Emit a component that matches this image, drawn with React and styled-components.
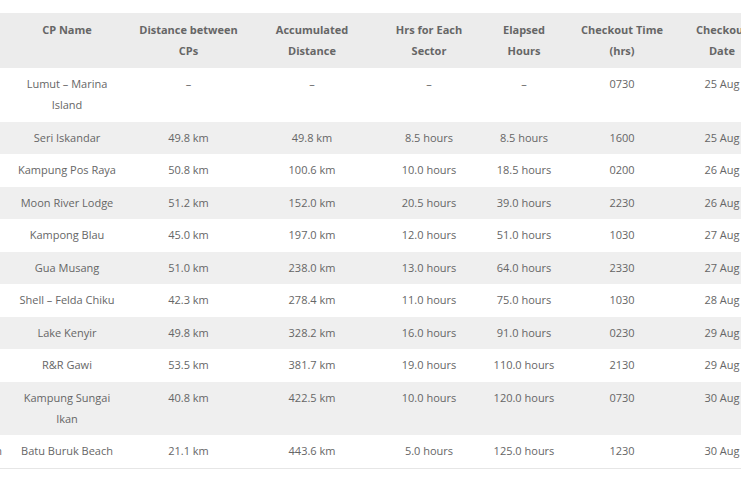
import React from 'react';
import styled, { createGlobalStyle } from 'styled-components';

const GlobalStyle = createGlobalStyle`
    html, body {
        margin: 0;
        padding: 0;
        background: #fff;
    }
    body {
        font-family: 'Open Sans', 'Noto Sans', sans-serif;
    }
`;

const Viewport = styled.div`
    width: 741px;
    height: 486px;
    overflow: hidden;
    padding-top: 13px;
    box-sizing: border-box;
`;

const Tabla = styled.table`
    margin-left: -33px;
    border-collapse: collapse;
    table-layout: fixed;
    width: 797px;
    font-size: 11px;
    line-height: 21px;
    color: #666;
    border-bottom: 1px solid #e6e6e6;
`;

const Fila = styled.tr`
    background: ${(p) => (p.$striped ? '#efefef' : '#fff')};
`;

const Encabezado = styled.th`
    background: #ececec;
    font-weight: 700;
    color: #666;
    text-align: center;
    vertical-align: top;
    padding: 5.5px 2px 7.5px;
    white-space: nowrap;
`;

const Celda = styled.td`
    text-align: center;
    vertical-align: top;
    padding: 5px 2px 6.5px;
    white-space: nowrap;
`;

const anchos = [40, 120, 123, 124, 110, 80, 116, 84];

const encabezados = [
    'CP',
    'CP Name',
    ['Distance between', 'CPs'],
    ['Accumulated', 'Distance'],
    ['Hrs for Each', 'Sector'],
    ['Elapsed', 'Hours'],
    ['Checkout Time', '(hrs)'],
    ['Checkout', 'Date'],
];

const filas = [
    ['Start', ['Lumut – Marina', 'Island'], '–', '–', '–', '–', '0730', '25 Aug'],
    ['CP 1', 'Seri Iskandar', '49.8 km', '49.8 km', '8.5 hours', '8.5 hours', '1600', '25 Aug'],
    ['CP 2', 'Kampung Pos Raya', '50.8 km', '100.6 km', '10.0 hours', '18.5 hours', '0200', '26 Aug'],
    ['CP 3', 'Moon River Lodge', '51.2 km', '152.0 km', '20.5 hours', '39.0 hours', '2230', '26 Aug'],
    ['CP 4', 'Kampong Blau', '45.0 km', '197.0 km', '12.0 hours', '51.0 hours', '1030', '27 Aug'],
    ['CP 5', 'Gua Musang', '51.0 km', '238.0 km', '13.0 hours', '64.0 hours', '2330', '27 Aug'],
    ['CP 6', 'Shell – Felda Chiku', '42.3 km', '278.4 km', '11.0 hours', '75.0 hours', '1030', '28 Aug'],
    ['CP 7', 'Lake Kenyir', '49.8 km', '328.2 km', '16.0 hours', '91.0 hours', '0230', '29 Aug'],
    ['CP 8', 'R&R Gawi', '53.5 km', '381.7 km', '19.0 hours', '110.0 hours', '2130', '29 Aug'],
    ['CP 9', ['Kampung Sungai', 'Ikan'], '40.8 km', '422.5 km', '10.0 hours', '120.0 hours', '0730', '30 Aug'],
    ['Finish', 'Batu Buruk Beach', '21.1 km', '443.6 km', '5.0 hours', '125.0 hours', '1230', '30 Aug'],
];

const Texto = ({ valor }) =>
    Array.isArray(valor) ? (
        <>
            {valor[0]}
            <br />
            {valor[1]}
        </>
    ) : (
        valor
    );

const App = () => {
    return (
        <>
            <GlobalStyle />
            <Viewport>
                <Tabla>
                    <colgroup>
                        {anchos.map((w, i) => (
                            <col key={i} style={{ width: w }} />
                        ))}
                    </colgroup>
                    <thead>
                        <tr>
                            {encabezados.map((h, i) => (
                                <Encabezado key={i}>
                                    <Texto valor={h} />
                                </Encabezado>
                            ))}
                        </tr>
                    </thead>
                    <tbody>
                        {filas.map((fila, i) => (
                            <Fila key={i} $striped={i % 2 === 1}>
                                {fila.map((v, j) => (
                                    <Celda key={j}>
                                        <Texto valor={v} />
                                    </Celda>
                                ))}
                            </Fila>
                        ))}
                    </tbody>
                </Tabla>
            </Viewport>
        </>
    );
};

export default App;
